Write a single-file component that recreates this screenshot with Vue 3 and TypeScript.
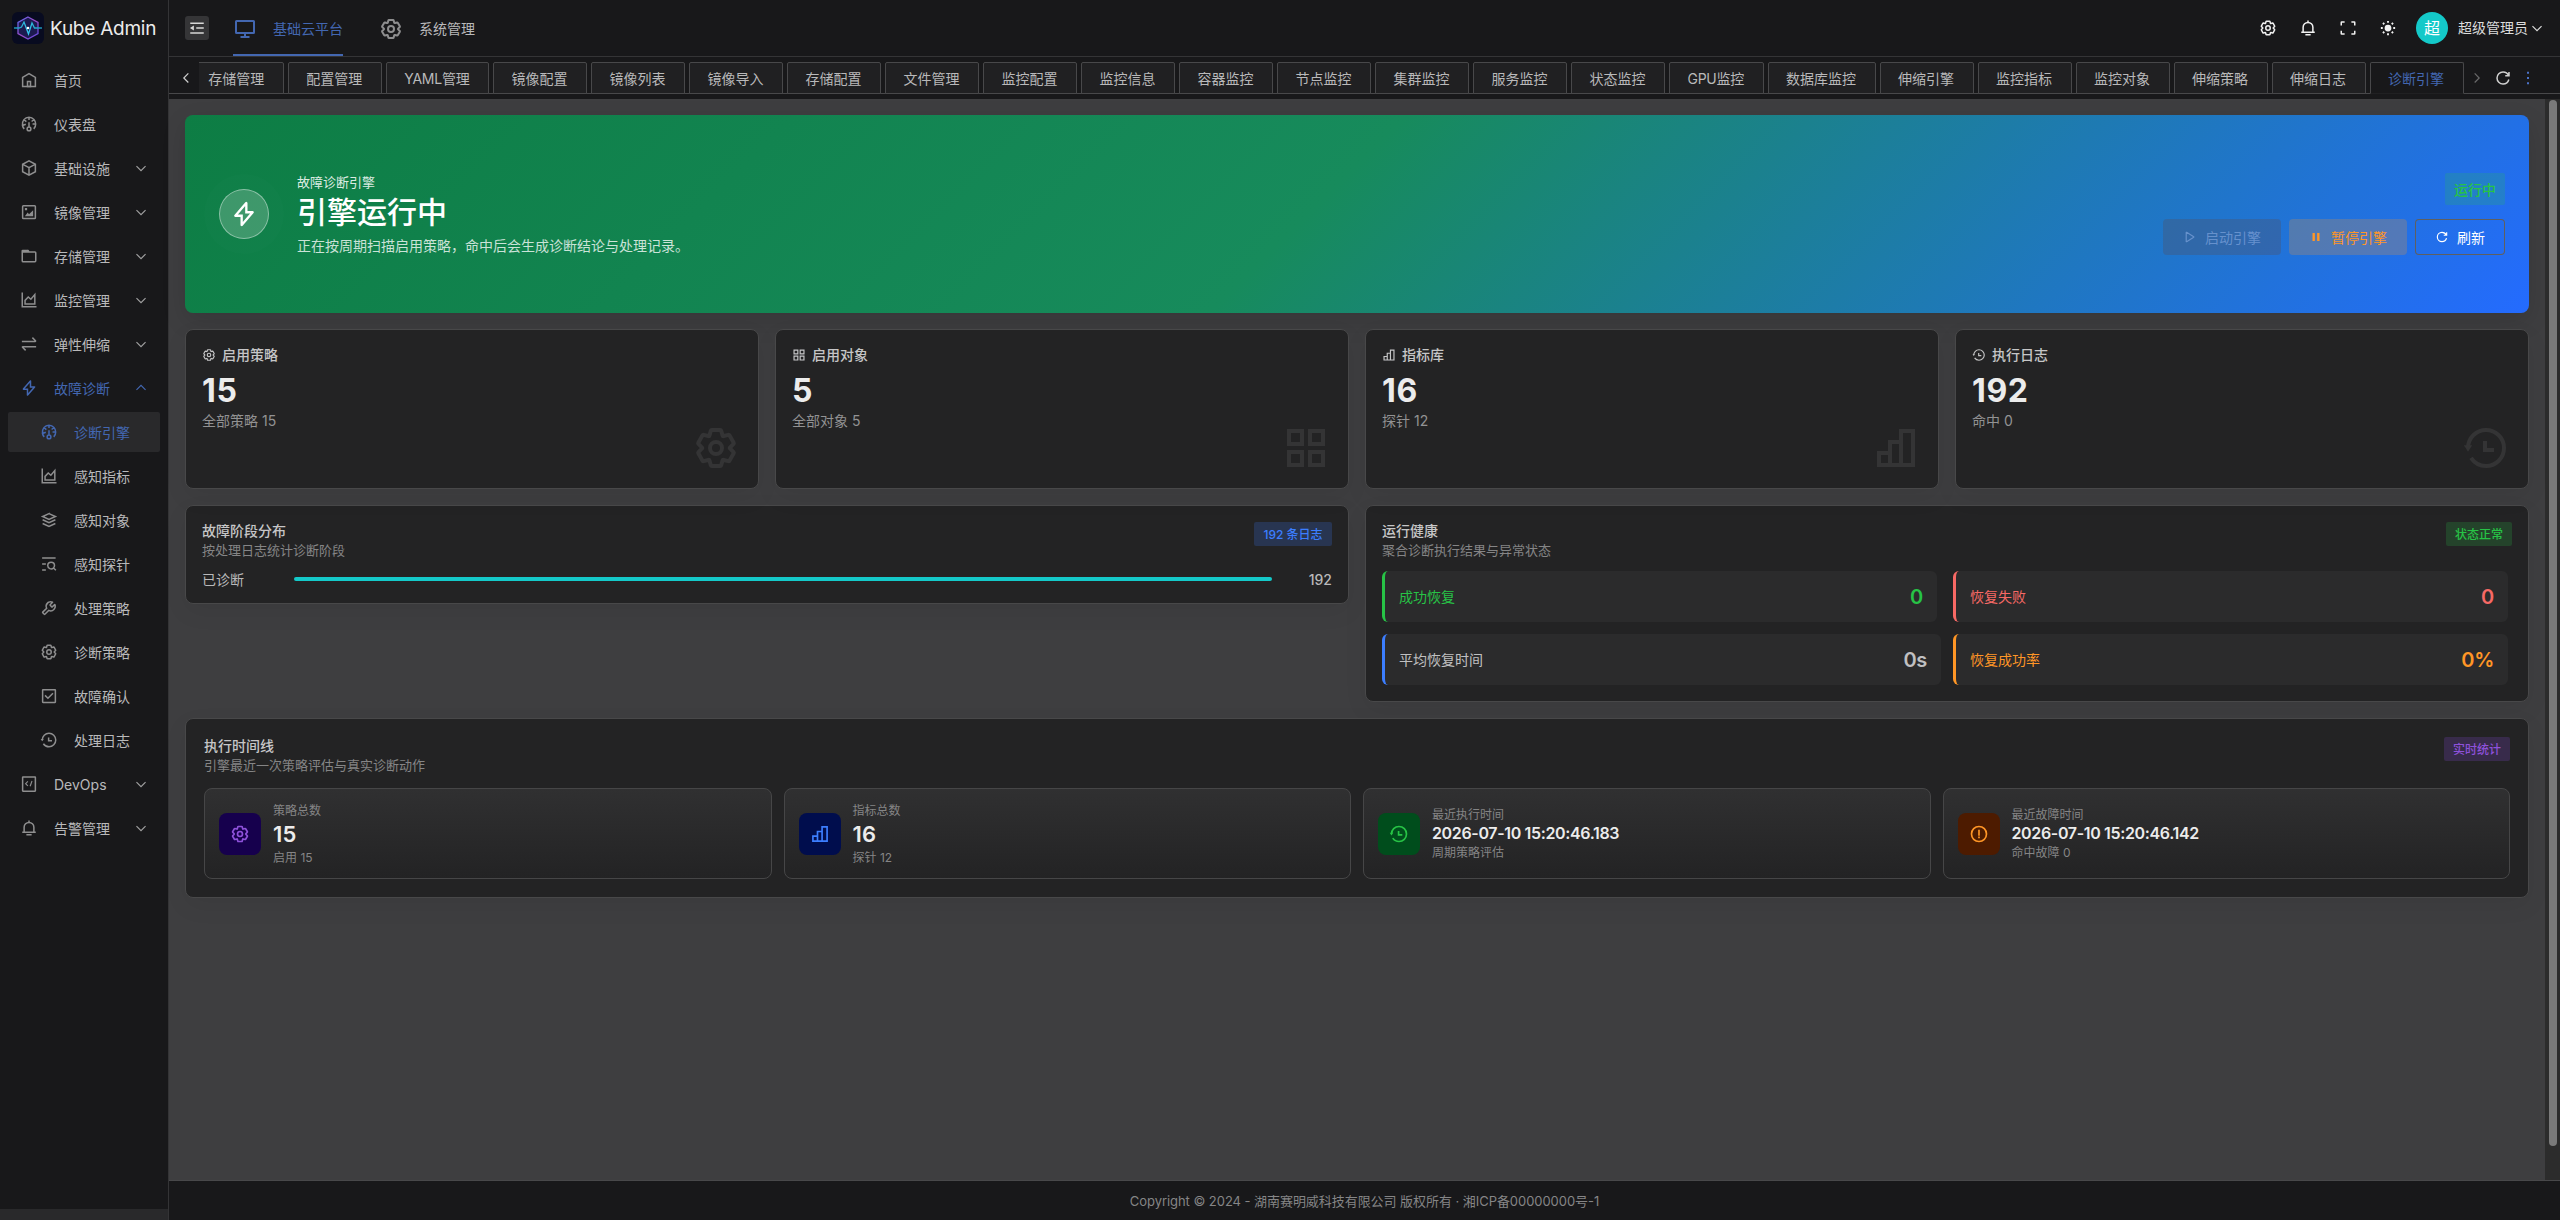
<script setup lang="ts">
import { h, type FunctionalComponent } from 'vue'

const ICONS: Record<string, string> = {
  home: '<path d="M7 17 24 7l17 10v24H7V17Z"/><path d="M20 28h8v13h-8V28Z"/>',
  dashboard: '<path d="M41.808 24c.118 4.63-1.486 9.333-5.21 13m5.21-13h-8.309m8.309 0c-.112-4.38-1.767-8.694-4.627-12M24 6c5.531 0 10.07 2.404 13.18 6M24 6c-5.724 0-10.384 2.574-13.5 6.38M24 6v7.5M37.18 12 31 17.5m-20.5-5.12L17 17.5m-6.5-5.12C6.99 16.662 5.44 22.508 6.53 28m4.872 9c-2.65-2.609-4.226-5.742-4.873-9m0 0 8.97-3.5"/><path d="M24 32a5 5 0 1 0 0 10 5 5 0 0 0 0-10Zm0 0V19"/>',
  cube: '<path d="M24 23 7.652 14.345M24 23l16.366-8.664M24 23v19.438M7 14v20l17 9 17-9V14L24 5 7 14Z"/>',
  image: '<path d="m24 33 9-9v9h-9Zm0 0-3.5-4.5L17 33h7Zm15 8H9a2 2 0 0 1-2-2V9a2 2 0 0 1 2-2h30a2 2 0 0 1 2 2v30a2 2 0 0 1-2 2ZM15 15h2v2h-2v-2Z"/><path d="M33 33v-9l-9 9h9ZM23.5 33l-3-4-3 4h6ZM15 15h2v2h-2z" fill="currentColor" stroke="none"/>',
  folder: '<path d="M6 13h18l-2.527-3.557a1.077 1.077 0 0 0-.88-.443H7.06C6.474 9 6 9.448 6 10v4Zm0 0h33.882c1.17 0 2.118.895 2.118 2v21c0 1.105-.948 3-2.118 3H8.118C6.948 39 6 38.105 6 37V13Z"/>',
  area: '<path d="M6 4v38h38"/><path d="M13.5 34.5V25l8.500-9 7 6L39.500 9.500v25h-26Z"/>',
  swap: '<path d="M5 17h35.586c.89 0 1.337-1.077.707-1.707L33 7M43 31H7.414c-.89 0-1.337 1.077-.707 1.707L15 41"/>',
  bolt: '<path d="M27.824 5.203A.1.1 0 0 1 28 5.27V21h10.782a.1.1 0 0 1 .075.165L20.176 42.797A.1.1 0 0 1 20 42.73V27H9.219a.1.1 0 0 1-.076-.165L27.824 5.203Z"/>',
  layers: '<path d="M24.015 7.017 41 14.62l-16.985 7.605L7.03 14.62l16.985-7.604Z"/><path d="m41 23.255-16.985 7.604L7.03 23.255M40.97 33.412l-16.985 7.605L7 33.412"/>',
  find: '<path d="M42.353 40.854 36.01 34.51m0 0a9 9 0 0 1-15.364-6.364c0-5 4-9 9-9s9 4 9 9a8.972 8.972 0 0 1-2.636 6.364Zm5.636-26.365h-36m10 16h-10m10 16h-10"/>',
  tool: '<path d="M19.994 11.035c3.66-3.659 9.094-4.46 13.531-2.405a.1.1 0 0 1 .028.16l-6.488 6.488a1 1 0 0 0 0 1.414l4.243 4.243a1 1 0 0 0 1.414 0l6.488-6.488a.1.1 0 0 1 .16.028c2.056 4.437 1.254 9.872-2.405 13.53-3.695 3.696-9.2 4.477-13.66 2.347L12.923 40.733a1 1 0 0 1-1.414 0L7.266 36.49a1 1 0 0 1 0-1.414l10.382-10.382c-2.13-4.46-1.349-9.965 2.346-13.66Z"/>',
  settings: '<path d="M18.797 6.732A1 1 0 0 1 19.76 6h8.48a1 1 0 0 1 .964.732l1.285 4.628a1 1 0 0 0 1.213.7l4.651-1.2a1 1 0 0 1 1.116.468l4.24 7.344a1 1 0 0 1-.153 1.2L38.193 23.3a1 1 0 0 0 0 1.402l3.364 3.427a1 1 0 0 1 .153 1.2l-4.24 7.344a1 1 0 0 1-1.116.468l-4.65-1.2a1 1 0 0 0-1.214.7l-1.285 4.628a1 1 0 0 1-.964.732h-8.48a1 1 0 0 1-.963-.732L17.51 36.64a1 1 0 0 0-1.213-.7l-4.65 1.2a1 1 0 0 1-1.116-.468l-4.24-7.344a1 1 0 0 1 .153-1.2L9.809 24.7a1 1 0 0 0 0-1.402l-3.364-3.427a1 1 0 0 1-.153-1.2l4.24-7.344a1 1 0 0 1 1.116-.468l4.65 1.2a1 1 0 0 0 1.213-.7l1.286-4.628Z"/><path d="M30 24a6 6 0 1 1-12 0 6 6 0 0 1 12 0Z"/>',
  check: '<path d="M34.603 16.672 21.168 30.107l-7.778-7.779M8 41h32a1 1 0 0 0 1-1V8a1 1 0 0 0-1-1H8a1 1 0 0 0-1 1v32a1 1 0 0 0 1 1Z"/>',
  history: '<path d="M6 24c0-9.941 8.059-18 18-18s18 8.059 18 18-8.059 18-18 18c-6.26 0-11.775-3.197-15-8.047M6 24l-.5-.757h1L6 24Zm26 2h-9v-9"/>',
  code: '<path d="M8 5h32a1 1 0 0 1 1 1v36a1 1 0 0 1-1 1H8a1 1 0 0 1-1-1V6a1 1 0 0 1 1-1Z"/><path d="m21 17-6 6 6 6M32 16l-5 14" stroke-width="3"/>',
  bell: '<path d="M24 9c7.18 0 13 5.82 13 13v13H11V22c0-7.18 5.82-13 13-13Zm0 0V4M6 35h36m-25 7h14"/>',
  desktop: '<path d="M24 32v8m0 0h-9m9 0h9M7 32h34a1 1 0 0 0 1-1V9a1 1 0 0 0-1-1H7a1 1 0 0 0-1 1v22a1 1 0 0 0 1 1Z"/>',
  fold: '<path d="M42 11H6M42 24H22M42 37H6M13.66 26.912l-4.82-3.118 4.82-3.118v6.236Z"/>',
  full: '<path d="M42 17V9a1 1 0 0 0-1-1h-8M6 17V9a1 1 0 0 1 1-1h8m27 23v8a1 1 0 0 1-1 1h-8M6 31v8a1 1 0 0 0 1 1h8"/>',
  sun: '<g fill="currentColor" stroke="none"><circle cx="24" cy="24" r="9"/><path d="M21.500 5h5v5h-5zM21.500 38h5v5h-5zM5 21.500h5v5H5zM38 21.500h5v5h-5zM12.300 8.800l3.500 3.500-3.500 3.500-3.500-3.500zM35.700 8.800l3.500 3.500-3.500 3.500-3.500-3.500zM12.300 32.200l3.500 3.500-3.500 3.500-3.500-3.500zM35.700 32.200l3.500 3.500-3.500 3.500-3.500-3.500z"/></g>',
  apps: '<path d="M7 7h13v13H7zM28 7h13v13H28zM7 28h13v13H7zM28 28h13v13H28z"/>',
  bars: '<path d="M41 7H29v34h12V7ZM29 18H18v23h11V18ZM18 29H7v12h11V29Z"/>',
  refresh: '<path d="M38.837 18C36.463 12.136 30.715 8 24 8 15.163 8 8 15.163 8 24s7.163 16 16 16c7.455 0 13.720-5.100 15.496-12M40 8v10H30"/>',
  pause: '<path d="M14 12h4v24h-4zM30 12h4v24h-4z" fill="currentColor"/>',
  play: '<path d="M12.533 7.965A1 1 0 0 0 11 8.810v30.377a1 1 0 0 0 1.533.846L36.656 24.840a1 1 0 0 0 0-1.692L12.533 7.965Z"/>',
  alert: '<path d="M24 28V14m0 16v4M6 24c0-9.941 8.059-18 18-18s18 8.059 18 18-8.059 18-18 18S6 33.941 6 24Z"/>',
  down: '<path d="M39.600 17.443 24.043 33 8.487 17.443"/>',
  up: '<path d="M39.600 30.557 24.043 15 8.487 30.557"/>',
  left: '<path d="M32 8.400 16.444 23.956 32 39.513"/>',
  right: '<path d="m16 39.513 15.556-15.557L16 8.400"/>',
  more: '<path d="M23 7h2v2h-2zM23 23h2v2h-2zM23 39h2v2h-2z" fill="currentColor"/>',
}

const Icon: FunctionalComponent<{ name: string; size?: number }> = (props) =>
  h('svg', {
    viewBox: '0 0 48 48',
    width: props.size ?? 14,
    height: props.size ?? 14,
    fill: 'none',
    stroke: 'currentColor',
    'stroke-width': 4,
    innerHTML: ICONS[props.name],
  })
Icon.props = ['name', 'size']

interface MenuEntry {
  label: string
  icon: string
  arrow?: 'down' | 'up'
  sub?: boolean
  state?: 'open' | 'active'
}

const menu: MenuEntry[] = [
  { label: '首页', icon: 'home' },
  { label: '仪表盘', icon: 'dashboard' },
  { label: '基础设施', icon: 'cube', arrow: 'down' },
  { label: '镜像管理', icon: 'image', arrow: 'down' },
  { label: '存储管理', icon: 'folder', arrow: 'down' },
  { label: '监控管理', icon: 'area', arrow: 'down' },
  { label: '弹性伸缩', icon: 'swap', arrow: 'down' },
  { label: '故障诊断', icon: 'bolt', arrow: 'up', state: 'open' },
  { label: '诊断引擎', icon: 'dashboard', sub: true, state: 'active' },
  { label: '感知指标', icon: 'area', sub: true },
  { label: '感知对象', icon: 'layers', sub: true },
  { label: '感知探针', icon: 'find', sub: true },
  { label: '处理策略', icon: 'tool', sub: true },
  { label: '诊断策略', icon: 'settings', sub: true },
  { label: '故障确认', icon: 'check', sub: true },
  { label: '处理日志', icon: 'history', sub: true },
  { label: 'DevOps', icon: 'code', arrow: 'down' },
  { label: '告警管理', icon: 'bell', arrow: 'down' },
]

const tabs = [
  '存储管理', '配置管理', 'YAML管理', '镜像配置', '镜像列表', '镜像导入', '存储配置', '文件管理',
  '监控配置', '监控信息', '容器监控', '节点监控', '集群监控', '服务监控', '状态监控', 'GPU监控',
  '数据库监控', '伸缩引擎', '监控指标', '监控对象', '伸缩策略', '伸缩日志', '诊断引擎',
]

const stats = [
  { icon: 'settings', title: '启用策略', value: '15', note: '全部策略 15' },
  { icon: 'apps', title: '启用对象', value: '5', note: '全部对象 5' },
  { icon: 'bars', title: '指标库', value: '16', note: '探针 12' },
  { icon: 'history', title: '执行日志', value: '192', note: '命中 0' },
]

const health = [
  { label: '成功恢复', value: '0', tone: 'green' },
  { label: '恢复失败', value: '0', tone: 'red' },
  { label: '平均恢复时间', value: '0s', tone: 'blue' },
  { label: '恢复成功率', value: '0%', tone: 'orange' },
]

const timeline = [
  { icon: 'settings', tone: 'purple', label: '策略总数', value: '15', note: '启用 15' },
  { icon: 'bars', tone: 'navy', label: '指标总数', value: '16', note: '探针 12' },
  { icon: 'history', tone: 'forest', label: '最近执行时间', value: '2026-07-10 15:20:46.183', note: '周期策略评估', date: true },
  { icon: 'alert', tone: 'rust', label: '最近故障时间', value: '2026-07-10 15:20:46.142', note: '命中故障 0', date: true },
]
</script>

<template>
  <div class="app">
    <aside class="sider">
      <div class="brand">
        <svg class="logo" viewBox="0 0 32 32" width="32" height="32">
          <defs>
            <linearGradient id="hex" x1="0" y1="0" x2="1" y2="1">
              <stop offset="0" stop-color="#5b6cf0" />
              <stop offset=".5" stop-color="#a04bc8" />
              <stop offset="1" stop-color="#5a4be0" />
            </linearGradient>
            <linearGradient id="pulse" x1="0" y1="0" x2="1" y2="0">
              <stop offset="0" stop-color="#1a8fb0" />
              <stop offset=".5" stop-color="#35c8f0" />
              <stop offset="1" stop-color="#1a8fb0" />
            </linearGradient>
          </defs>
          <rect width="32" height="32" rx="6" fill="#080b20" />
          <path d="M16 5 26 10.500v11L16 27 6 21.500v-11Z" fill="#1c1a50" stroke="url(#hex)" stroke-width="1.300" />
          <path d="M2 16h5l2.500-1 2.500-5 4.500 12 3.500-11 2.500 5H30" fill="none" stroke="url(#pulse)" stroke-width="1.300" />
          <circle cx="16" cy="16" r="1.300" fill="#fff" />
        </svg>
        <span class="brand-name">Kube Admin</span>
      </div>
      <nav class="menu">
        <div v-for="m in menu" :key="m.label + m.icon" class="menu-item" :class="[m.state, { sub: m.sub }]">
          <Icon :name="m.icon" :size="18" class="menu-icon" />
          <span class="menu-label">{{ m.label }}</span>
          <Icon v-if="m.arrow" :name="m.arrow" :size="14" class="menu-arrow" />
        </div>
      </nav>
      <div class="collapse"></div>
    </aside>

    <div class="main">
      <header class="header">
        <div class="fold"><Icon name="fold" :size="18" /></div>
        <div class="nav-item current"><Icon name="desktop" :size="24" /><span>基础云平台</span></div>
        <div class="nav-item"><Icon name="settings" :size="24" /><span>系统管理</span></div>
        <div class="tools">
          <Icon name="settings" :size="18" />
          <Icon name="bell" :size="18" />
          <Icon name="full" :size="18" />
          <Icon name="sun" :size="18" />
        </div>
        <div class="avatar">超</div>
        <div class="user"><span>超级管理员</span><Icon name="down" :size="14" /></div>
      </header>

      <div class="tabbar">
        <div class="tab-prev"><Icon name="left" :size="14" /></div>
        <div class="tabs">
          <div
            v-for="(t, i) in tabs"
            :key="t"
            class="tab"
            :class="{ on: i === tabs.length - 1, mixed: /[A-Z]/.test(t) }"
          >{{ t }}</div>
        </div>
        <div class="tab-next"><Icon name="right" :size="14" /></div>
        <div class="tab-refresh"><Icon name="refresh" :size="18" /></div>
        <div class="tab-more"><Icon name="more" :size="16" /></div>
      </div>

      <div class="scroller">
        <main class="page">
          <section class="hero">
            <div class="orb"><Icon name="bolt" :size="28" /></div>
            <div class="hero-text">
              <div class="hero-kicker">故障诊断引擎</div>
              <div class="hero-title">引擎运行中</div>
              <div class="hero-desc">正在按周期扫描启用策略，命中后会生成诊断结论与处理记录。</div>
            </div>
            <div class="hero-side">
              <div class="run-tag">运行中</div>
              <div class="buttons">
                <div class="btn start"><Icon name="play" /><span>启动引擎</span></div>
                <div class="btn stop"><Icon name="pause" /><span>暂停引擎</span></div>
                <div class="btn reload"><Icon name="refresh" /><span>刷新</span></div>
              </div>
            </div>
          </section>

          <section class="stats">
            <div v-for="s in stats" :key="s.title" class="card stat">
              <div class="stat-title"><Icon :name="s.icon" /><span>{{ s.title }}</span></div>
              <div class="stat-value">{{ s.value }}</div>
              <div class="stat-note">{{ s.note }}</div>
              <Icon :name="s.icon" :size="48" class="stat-mark" />
            </div>
          </section>

          <section class="panels">
            <div class="card panel">
              <div class="panel-head">
                <div class="panel-names">
                  <div class="panel-title">故障阶段分布</div>
                  <div class="panel-sub">按处理日志统计诊断阶段</div>
                </div>
                <div class="tag tag-blue">192 条日志</div>
              </div>
              <div class="stage">
                <span class="stage-name">已诊断</span>
                <div class="stage-bar"></div>
                <span class="stage-count">192</span>
              </div>
            </div>
            <div class="card panel panel-health">
              <div class="panel-head">
                <div class="panel-names">
                  <div class="panel-title">运行健康</div>
                  <div class="panel-sub">聚合诊断执行结果与异常状态</div>
                </div>
                <div class="tag tag-green">状态正常</div>
              </div>
              <div class="health">
                <div v-for="m in health" :key="m.label" class="metric" :class="m.tone">
                  <span>{{ m.label }}</span><b>{{ m.value }}</b>
                </div>
              </div>
            </div>
          </section>

          <section class="card timeline">
            <div class="panel-head">
              <div class="panel-names">
                <div class="panel-title">执行时间线</div>
                <div class="panel-sub">引擎最近一次策略评估与真实诊断动作</div>
              </div>
              <div class="tag tag-purple">实时统计</div>
            </div>
            <div class="events">
              <div v-for="e in timeline" :key="e.label" class="event">
                <div class="event-icon" :class="e.tone"><Icon :name="e.icon" :size="20" /></div>
                <div class="event-body" :class="{ date: e.date }">
                  <div class="event-label">{{ e.label }}</div>
                  <div class="event-value">{{ e.value }}</div>
                  <div class="event-label">{{ e.note }}</div>
                </div>
              </div>
            </div>
          </section>
        </main>
        <div class="track"><div class="thumb"></div></div>
      </div>

      <footer class="footer">Copyright © 2024 - 湖南赛明威科技有限公司 版权所有 · 湘ICP备00000000号-1</footer>
    </div>
  </div>
</template>

<style>
body {
  background: #18181a;
}
</style>

<style scoped>
.app {
  display: flex;
  width: 2560px;
  height: 1220px;
  overflow: hidden;
  background: #18181a;
  color: #b9b9ba;
  font-family: Inter, 'Noto Sans CJK SC', sans-serif;
  font-size: 14px;
  line-height: 20px;
}
.app * {
  box-sizing: border-box;
}
.app svg {
  display: block;
  flex: none;
}

.sider {
  display: flex;
  flex-direction: column;
  flex: none;
  width: 169px;
  box-sizing: border-box;
  border-right: 1px solid #343436;
}
.brand {
  display: flex;
  align-items: center;
  height: 56px;
  padding-left: 12px;
}
.brand-name {
  margin-left: 6px;
  padding-top: 2px;
  color: #ececec;
  font-size: 19px;
  letter-spacing: -0.25px;
  line-height: 28px;
  white-space: nowrap;
}
.menu {
  flex: 1;
  padding: 4px 8px 0;
}
.menu-item {
  display: flex;
  align-items: center;
  height: 40px;
  margin-bottom: 4px;
  padding: 0 12px;
  border-radius: 2px;
}
.menu-item.sub {
  padding-left: 32px;
}
.menu-icon {
  margin-right: 16px;
  color: #8e8e8f;
}
.menu-arrow {
  margin-left: auto;
  color: #a0a0a1;
}
.menu-label {
  padding-top: 2px;
}
.menu-item.open,
.menu-item.active,
.menu-item.open > svg,
.menu-item.active > svg {
  color: #4367b1;
}
.menu-item.active {
  background: #29292b;
}
.collapse {
  height: 11px;
  background: #29292b;
}

.main {
  display: flex;
  flex: 1;
  flex-direction: column;
  min-width: 0;
}
.header {
  display: flex;
  align-items: center;
  height: 57px;
  padding: 0 16px;
  border-bottom: 1px solid #343436;
}
.fold {
  display: flex;
  align-items: center;
  justify-content: center;
  width: 24px;
  height: 24px;
  margin-right: 24px;
  border-radius: 3px;
  background: #353537;
  color: #d8d8d8;
}
.nav-item {
  display: flex;
  align-items: center;
  gap: 16px;
  height: 56px;
  margin-right: 36px;
  padding-top: 4px;
  border-bottom: 2px solid transparent;
}
.nav-item > svg {
  color: #8e8e8f;
}
.nav-item.current,
.nav-item.current > svg {
  border-color: #4367b1;
  color: #4367b1;
}
.tools {
  display: flex;
  gap: 22px;
  margin-left: auto;
  color: #f0f0f0;
}
.avatar {
  width: 32px;
  height: 32px;
  margin: 0 10px 0 19px;
  border-radius: 50%;
  background: #14c9c9;
  color: #fff;
  font-size: 16px;
  line-height: 32px;
  text-align: center;
}
.user {
  display: flex;
  align-items: center;
  gap: 2px;
  color: #dcdcdc;
}

.tabbar {
  display: flex;
  align-items: flex-end;
  flex: none;
  height: 37px;
  border-bottom: 1px solid #48484a;
}
.tab-prev,
.tab-next,
.tab-refresh,
.tab-more {
  display: flex;
  align-items: center;
  height: 30px;
}
.tab-prev {
  width: 30px;
  padding-left: 10px;
  color: #d0d0d0;
}
.tabs {
  display: flex;
  flex: none;
  justify-content: flex-end;
  gap: 4px;
  width: 2265px;
  height: 32px;
  margin-bottom: -1px;
  overflow: hidden;
}
.tab {
  flex: none;
  height: 32px;
  padding: 0 19px 0 17px;
  border: 1px solid #48484a;
  border-radius: 2px 2px 0 0;
  background: #202022;
  line-height: 31px;
}
.tab.mixed {
  letter-spacing: -0.25px;
}
.tab.on {
  border-bottom-color: #202022;
  background: #18181a;
  color: #4367b1;
}
.tab-next {
  width: 30px;
  padding-left: 6px;
  color: #6a6a6b;
}
.tab-refresh {
  width: 26px;
  color: #d0d0d0;
}
.tab-more {
  color: #4a72c8;
}

.scroller {
  display: flex;
  flex: 1;
  margin-top: 5px;
  background: #3e3e40;
}
.page {
  display: flex;
  flex: 1;
  flex-direction: column;
  gap: 16px;
  padding: 16px;
}
.track {
  width: 15px;
  height: 1081px;
  padding: 1px 3px 0 4px;
  background: #2c2c2c;
}
.thumb {
  height: 1046px;
  border-radius: 4px;
  background: #7a7a7a;
}

.hero {
  display: flex;
  align-items: center;
  height: 198px;
  padding: 0 24px 0 34px;
  border-radius: 8px;
  background: linear-gradient(135deg, #0d7d44 0%, #178b5c 48%, #246bff 100%);
  box-shadow: 0 8px 24px rgba(0, 0, 0, 0.12);
}
.orb {
  display: flex;
  align-items: center;
  justify-content: center;
  width: 50px;
  height: 50px;
  border: 1px solid rgba(255, 255, 255, 0.4);
  border-radius: 50%;
  background: rgba(255, 255, 255, 0.2);
  box-shadow: 0 0 0 15px rgba(255, 255, 255, 0.012);
  color: #fff;
}
.hero-text {
  margin-left: 28px;
}
.hero-kicker {
  color: rgba(255, 255, 255, 0.86);
  font-size: 13px;
  line-height: 20px;
}
.hero-title {
  color: #fff;
  font-size: 30px;
  font-weight: 500;
  line-height: 40px;
}
.hero-desc {
  margin-top: 3px;
  color: rgba(255, 255, 255, 0.78);
  line-height: 22px;
}
.hero-side {
  display: flex;
  flex-direction: column;
  align-items: flex-end;
  gap: 14px;
  margin-left: auto;
}
.run-tag {
  width: 60px;
  height: 32px;
  border-radius: 2px;
  background: rgba(39, 195, 70, 0.2);
  color: #27c346;
  font-weight: 500;
  line-height: 33px;
  text-align: center;
}
.buttons {
  display: flex;
  gap: 8px;
}
.btn {
  display: flex;
  align-items: center;
  gap: 8px;
  height: 36px;
  padding: 0 20px;
  border-radius: 4px;
}
.btn span {
  padding-top: 1px;
}
.start {
  background: rgba(77, 83, 110, 0.38);
  color: rgba(180, 205, 255, 0.42);
}
.stop {
  background: rgba(158, 134, 118, 0.4);
  color: #ff9626;
}
.reload {
  box-shadow: inset 0 0 0 1px #5f5f5f;
  color: #fff;
}

.card {
  border: 1px solid #484849;
  border-radius: 8px;
  background: #232324;
  box-shadow: 0 8px 24px rgba(0, 0, 0, 0.06);
}
.stats {
  display: grid;
  grid-template-columns: repeat(4, 1fr);
  gap: 16px;
}
.stat {
  position: relative;
  height: 160px;
  padding: 14px 16px;
}
.stat-title {
  display: flex;
  align-items: center;
  gap: 6px;
  height: 22px;
  color: #c6c6c7;
  font-weight: 500;
}
.stat-value {
  margin-top: 5px;
  color: #ececec;
  font-size: 32px;
  font-weight: 700;
  letter-spacing: 0.6px;
  line-height: 40px;
}
.stat-note {
  margin-top: -1px;
  color: #929293;
  line-height: 22px;
}
.stat-mark {
  position: absolute;
  right: 18px;
  bottom: 16px;
  color: #343435;
}

.panels {
  display: grid;
  grid-template-columns: 1fr 1fr;
  align-items: start;
  gap: 16px;
}
.panel {
  padding: 16px 16px 12px;
}
.panel-health {
  padding-bottom: 16px;
}
.panel-head {
  display: flex;
  align-items: flex-start;
  justify-content: space-between;
  height: 38px;
}
.panel-names {
  margin-top: -1px;
}
.panel-title {
  color: #c6c6c7;
  font-weight: 500;
  line-height: 20px;
}
.panel-sub {
  color: #858586;
  font-size: 13px;
  line-height: 18px;
}
.tag {
  height: 24px;
  padding: 0 9px;
  border-radius: 2px;
  font-size: 12px;
  font-weight: 500;
  line-height: 25px;
  text-align: center;
}
.tag-blue {
  min-width: 78px;
  background: #283551;
  color: #3c7eff;
}
.tag-green {
  background: #24432b;
  color: #27c346;
}
.tag-purple {
  background: #382b4b;
  color: #8e51da;
}
.stage {
  display: flex;
  align-items: center;
  gap: 12px;
  height: 22px;
  margin-top: 9px;
}
.stage-name {
  width: 80px;
}
.stage-bar {
  flex: 1;
  height: 4px;
  margin-bottom: 2px;
  border-radius: 2px;
  background: #14c9c9;
}
.stage-count {
  width: 48px;
  font-weight: 500;
  text-align: right;
}
.health {
  display: grid;
  grid-template-columns: 571px 555px;
  gap: 12px 0;
  margin-top: 11px;
}
.metric {
  display: flex;
  align-items: center;
  justify-content: space-between;
  width: 555px;
  height: 51px;
  padding: 0 14px;
  border-left: 3px solid currentColor;
  border-radius: 6px;
  background: #2b2b2c;
}
.metric b {
  font-size: 20px;
  font-weight: 600;
  letter-spacing: -0.3px;
}
.green {
  color: #27c346;
}
.red {
  color: #f76965;
}
.blue {
  width: 559px;
  border-color: #3c7eff;
  color: #c0c0c1;
}
.orange {
  color: #ff9626;
}

.timeline {
  height: 180px;
  padding: 18px;
}
.events {
  display: grid;
  grid-template-columns: repeat(4, 1fr);
  gap: 12px;
  margin-top: 13px;
}
.event {
  display: flex;
  align-items: center;
  gap: 12px;
  height: 91px;
  padding: 0 14px;
  border: 1px solid #464647;
  border-radius: 8px;
  background: linear-gradient(180deg, #303031, #232324);
}
.event-icon {
  display: flex;
  align-items: center;
  justify-content: center;
  width: 42px;
  height: 42px;
  border-radius: 8px;
}
.purple {
  background: #16004d;
  color: #8e51da;
}
.navy {
  background: #000d4d;
  color: #3c7eff;
}
.forest {
  background: #004d1c;
  color: #27c346;
}
.rust {
  background: #4d1b00;
  color: #ff9626;
}
.event-label {
  color: #858586;
  font-size: 12px;
  line-height: 19px;
}
.event-value {
  color: #ececec;
  font-size: 22px;
  font-weight: 600;
  letter-spacing: 0.3px;
  line-height: 28px;
}
.date .event-value {
  font-size: 16px;
  letter-spacing: -0.35px;
  line-height: 19px;
}

.footer {
  height: 40px;
  border-top: 1px solid #48484a;
  color: #858586;
  font-size: 13px;
  letter-spacing: -0.05px;
  line-height: 40px;
  text-align: center;
}
</style>
